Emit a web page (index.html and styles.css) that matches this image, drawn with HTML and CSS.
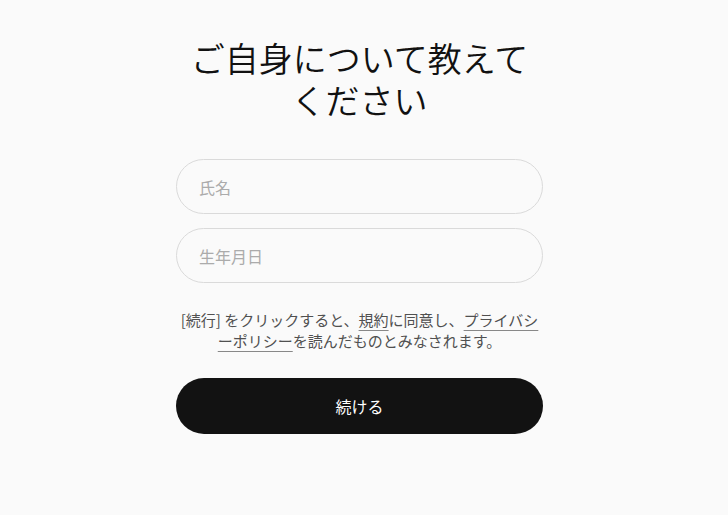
FILE: index.html
```html
<!DOCTYPE html>
<html lang="ja">
<head>
<meta charset="utf-8">
<link rel="stylesheet" href="styles.css">
</head>
<body>
<main class="page">
  <div class="card">
    <h1 class="title">ご自身について教えて<br>ください</h1>
    <form class="form">
      <input class="field" type="text" placeholder="氏名">
      <input class="field" type="text" placeholder="生年月日">
      <p class="terms">[続行] をクリックすると、<a class="link" href="#">規約</a>に同意し、<a class="link" href="#">プライバシーポリシー</a>を読んだものとみなされます。</p>
      <button class="submit" type="button">続ける</button>
    </form>
  </div>
</main>
</body>
</html>
```

FILE: styles.css
```css
html, body {
  margin: 0;
  padding: 0;
  background: #fafafa;
}
body {
  font-family: "Noto Sans CJK JP", "Noto Sans", sans-serif;
  color: #111;
}
.page {
  padding: 37px 9px 0 0;
  display: flex;
  justify-content: center;
}
.card {
  width: 367px;
  display: flex;
  flex-direction: column;
}
.title {
  margin: 0 -20px;
  font-size: 34px;
  line-height: 42px;
  font-weight: 350;
  text-align: center;
  color: #111;
}
.form {
  margin-top: 38px;
  display: flex;
  flex-direction: column;
}
.field {
  box-sizing: border-box;
  height: 55px;
  width: 100%;
  border: 1px solid #dadada;
  border-radius: 28px;
  background: #fafafa;
  padding: 0 22px;
  font-family: inherit;
  font-size: 16px;
  color: #222;
  outline: none;
}
.field + .field {
  margin-top: 14px;
}
.field::placeholder {
  color: #ababab;
}
.terms {
  margin: 26px 0 0;
  font-size: 15px;
  line-height: 21px;
  text-align: center;
  color: #505050;
}
.link {
  color: #505050;
  text-decoration: underline;
  text-decoration-color: #888;
  text-underline-offset: 4px;
}
.submit {
  margin-top: 27px;
  height: 56px;
  border: none;
  border-radius: 28px;
  background: #121212;
  color: #fff;
  font-family: inherit;
  font-size: 16px;
  cursor: pointer;
}
```
